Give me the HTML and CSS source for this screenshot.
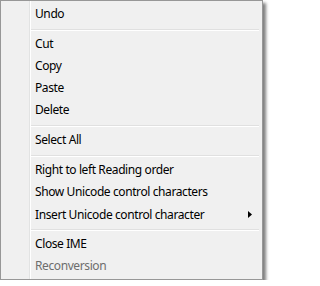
FILE: index.html
```html
<!DOCTYPE html>
<html>
<head>
<meta charset="utf-8">
<link rel="stylesheet" href="styles.css">
</head>
<body>
<div class="menu">
  <div class="item">Undo</div>
  <div class="sep"></div>
  <div class="item">Cut</div>
  <div class="item">Copy</div>
  <div class="item">Paste</div>
  <div class="item">Delete</div>
  <div class="sep"></div>
  <div class="item">Select All</div>
  <div class="sep"></div>
  <div class="item">Right to left Reading order</div>
  <div class="item">Show Unicode control characters</div>
  <div class="item sub"><span>Insert Unicode control character</span><svg class="arrow" width="4" height="7" viewBox="0 0 4 7"><polygon points="0,0 4,3.5 0,7" fill="#000"/></svg></div>
  <div class="sep"></div>
  <div class="item">Close IME</div>
  <div class="item disabled">Reconversion</div>
</div>
</body>
</html>
```
FILE: styles.css
```css
html, body {
  margin: 0;
  padding: 0;
  background: #ffffff;
}
body {
  font-family: "Noto Sans", "DejaVu Sans", sans-serif;
  font-size: 12px;
  letter-spacing: -0.4px;
}
.menu {
  width: 257px;
  padding: 2px;
  border: 1px solid #979797;
  background: linear-gradient(to right, #f0f0f0 28px, #e2e3e3 28px, #e2e3e3 29px, #ffffff 29px, #ffffff 30px, #f0f0f0 30px);
  box-shadow: 3px 3px 3px rgba(0, 0, 0, 0.5);
}
.item {
  height: 22px;
  line-height: 21px;
  padding-left: 32px;
  padding-right: 8px;
  color: #000000;
  white-space: nowrap;
}
.sub {
  display: flex;
  align-items: center;
  justify-content: space-between;
}
.arrow {
  display: block;
}
.disabled {
  color: #6d6d6d;
}
.sep {
  margin: 4px 1px 2px 28px;
  border-top: 1px solid #e0e0e0;
  border-bottom: 1px solid #ffffff;
}
```
